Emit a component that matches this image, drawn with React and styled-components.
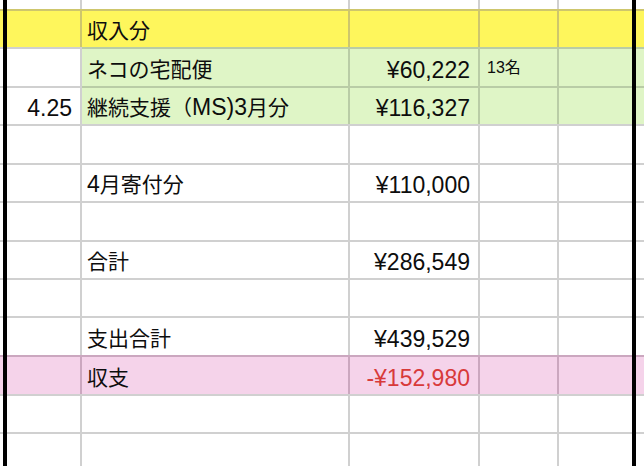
import React from "react";
import styled, { createGlobalStyle } from "styled-components";

const GlobalStyle = createGlobalStyle`
  html, body {
    margin: 0;
    padding: 0;
    background: #ffffff;
    overflow: hidden;
  }
  body {
    font-family: "Liberation Sans", "Noto Sans CJK JP", sans-serif;
    color: #0d0d0d;
  }
`;

const tones = {
  white: { bg: "#ffffff", line: "#d0d0d0" },
  yellow: { bg: "#fef65c", line: "#cec66c" },
  green: { bg: "#dff5c6", line: "#b9cca6" },
  pink: { bg: "#f5d3ea", line: "#cba7bf" },
};

const Sheet = styled.div`
  width: 644px;
  height: 466px;
  overflow: hidden;
  display: flex;
  flex-direction: column;
`;

const Row = styled.div`
  display: grid;
  grid-template-columns: 3px 4px 75px 268px 130px 79px 73px 4px 1fr;
  height: ${(p) => p.$h}px;
  flex-shrink: 0;
`;

const Cell = styled.div`
  box-sizing: border-box;
  display: flex;
  align-items: flex-end;
  justify-content: ${(p) => (p.$right ? "flex-end" : "flex-start")};
  background: ${(p) => p.$tone.bg};
  border-top: ${(p) => (p.$first ? "none" : `2px solid ${p.$tone.line}`)};
  border-right: ${(p) => (p.$edge ? "none" : `2px solid ${p.$tone.line}`)};
  padding: 0 ${(p) => (p.$right ? "8px" : "0")} 3px
    ${(p) => (p.$right ? "0" : "5px")};
  overflow: hidden;
  white-space: nowrap;
`;

const Rule = styled.div`
  background: #000000;
`;

const Label = styled.span`
  font-size: 21px;
  line-height: 26px;
`;

// latin runs inside a japanese label sit a little larger, as in the sheet
const Latin = styled.span`
  font-size: 23px;
`;

const Amount = styled.span`
  font-size: 23px;
  line-height: 26px;
  color: ${(p) => (p.$negative ? "#d83a3a" : "inherit")};
`;

const Note = styled.span`
  font-size: 16px;
  line-height: 26px;
  padding: 0 0 2px 2px;
`;

const rows = [
  { h: 9, first: true },
  { h: 38, tone: "yellow", wide: true, b: "収入分" },
  { h: 39, tone: "green", b: "ネコの宅配便", c: "¥60,222", d: "13名" },
  {
    h: 38,
    tone: "green",
    a: "4.25",
    b: (
      <>
        継続支援（<Latin>MS)3</Latin>月分
      </>
    ),
    c: "¥116,327",
  },
  { h: 39 },
  {
    h: 38,
    b: (
      <>
        <Latin>4</Latin>月寄付分
      </>
    ),
    c: "¥110,000",
  },
  { h: 39 },
  { h: 38, b: "合計", c: "¥286,549" },
  { h: 38 },
  { h: 39, b: "支出合計", c: "¥439,529" },
  { h: 39, tone: "pink", wide: true, b: "収支", c: "-¥152,980", negative: true },
  { h: 38 },
  { h: 38 },
];

const SheetRow = ({ row }) => {
  const tone = tones[row.tone || "white"];
  const lead = row.wide ? tone : tones.white;
  const first = row.first;
  return (
    <Row $h={row.h}>
      <Cell $tone={lead} $first={first} $edge />
      <Rule />
      <Cell $tone={lead} $first={first} $right>
        {row.a && <Amount>{row.a}</Amount>}
      </Cell>
      <Cell $tone={tone} $first={first}>
        {row.b && <Label>{row.b}</Label>}
      </Cell>
      <Cell $tone={tone} $first={first} $right>
        {row.c && <Amount $negative={row.negative}>{row.c}</Amount>}
      </Cell>
      <Cell $tone={tone} $first={first}>
        {row.d && <Note>{row.d}</Note>}
      </Cell>
      <Cell $tone={tone} $first={first} $edge />
      <Rule />
      <Cell $tone={tone} $first={first} $edge />
    </Row>
  );
};

const App = () => (
  <>
    <GlobalStyle />
    <Sheet>
      {rows.map((row, i) => (
        <SheetRow key={i} row={row} />
      ))}
    </Sheet>
  </>
);

export default App;
